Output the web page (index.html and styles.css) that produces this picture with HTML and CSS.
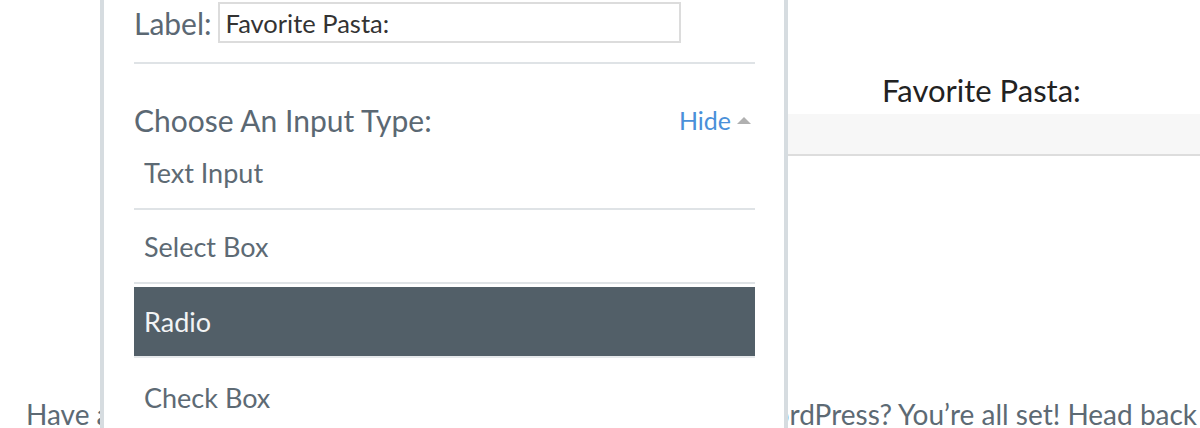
FILE: index.html
```html
<!DOCTYPE html>
<html lang="en">
<head>
<meta charset="utf-8">
<title>Form builder</title>
<link rel="stylesheet" href="styles.css">
</head>
<body>
<div class="stage">
  <aside class="panel">
    <div class="label-row">
      <span class="label-text">Label:</span>
      <input class="label-input" type="text" value="Favorite Pasta:">
    </div>
    <div class="type-head">
      <span class="type-title">Choose An Input Type:</span>
      <a class="hide-link" href="#">Hide <span class="caret"></span></a>
    </div>
    <ul class="type-list">
      <li class="type-item item-first">Text Input</li>
      <li class="type-item">Select Box</li>
      <li class="type-item is-active">Radio</li>
      <li class="type-item item-last">Check Box</li>
    </ul>
  </aside>
  <section class="preview">
    <div class="preview-label">Favorite Pasta:</div>
    <div class="preview-field"></div>
  </section>
  <p class="note">Have a site that you already host yourself and that runs on WordPress? You’re all set! Head back to your dashboard.</p>
</div>
</body>
</html>
```
FILE: styles.css
```css
html, body {
  margin: 0;
  padding: 0;
  background: #ffffff;
}
body {
  width: 1200px;
  height: 428px;
  overflow: hidden;
  font-family: "Lato", "Open Sans", sans-serif;
}
.stage {
  display: grid;
  grid-template-columns: 100px 688px 412px;
  grid-template-rows: 392px 36px;
  width: 1200px;
  height: 428px;
  overflow: hidden;
}
.panel {
  grid-column: 2;
  grid-row: 1 / 3;
  z-index: 1;
  background: #ffffff;
  border-left: 4px solid #d6dce0;
  border-right: 4px solid #d6dce0;
  padding: 0 29px 0 30px;
  overflow: hidden;
}
.label-row {
  display: flex;
  align-items: center;
  gap: 6px;
  height: 41px;
  padding-top: 2px;
  padding-bottom: 19px;
  border-bottom: 2px solid #dfe3e6;
}
.label-text {
  font-size: 30px;
  color: #5b6873;
}
.label-input {
  width: 463px;
  height: 41px;
  box-sizing: border-box;
  border: 2px solid #dcdcdc;
  padding: 0 6px;
  font-family: "Lato", sans-serif;
  font-size: 25.5px;
  color: #333333;
  outline: none;
}
.type-head {
  display: flex;
  justify-content: space-between;
  align-items: center;
  margin-top: 36px;
  height: 40px;
}
.type-title {
  font-size: 30px;
  color: #5b6873;
}
.hide-link {
  display: flex;
  align-items: center;
  gap: 6px;
  font-size: 25px;
  color: #4a90d9;
  text-decoration: none;
  padding-right: 4px;
}
.caret {
  width: 0;
  height: 0;
  border-left: 7px solid transparent;
  border-right: 7px solid transparent;
  border-bottom: 7px solid #b0b0b0;
}
.type-list {
  list-style: none;
  margin: 0;
  padding: 0;
}
.type-item {
  font-size: 27px;
  color: #5d6a74;
  padding-left: 10px;
  height: 72px;
  display: flex;
  align-items: center;
  border-bottom: 2px solid #dfe3e6;
}
.type-item.item-first {
  height: 68px;
  padding-bottom: 4px;
  box-sizing: content-box;
  height: 64px;
}
.type-item.is-active {
  background: #525f68;
  color: #f2f4f5;
  height: 69px;
  margin-top: 3px;
  border-bottom-color: #e6e9eb;
}
.type-item.item-last {
  height: 78px;
  border-bottom: none;
}
.preview {
  grid-column: 3;
  grid-row: 1;
  padding-top: 72px;
}
.preview-label {
  font-size: 31px;
  line-height: 36px;
  color: #222222;
  padding-left: 94px;
  height: 42px;
}
.preview-field {
  height: 40px;
  background: #f7f7f7;
  border-bottom: 2px solid #dddddd;
}
.note {
  grid-column: 1 / 4;
  grid-row: 2;
  margin: 0;
  padding: 4px 0 0 26px;
  font-size: 28px;
  color: #5d6a74;
  white-space: nowrap;
  line-height: 36px;
}
```
